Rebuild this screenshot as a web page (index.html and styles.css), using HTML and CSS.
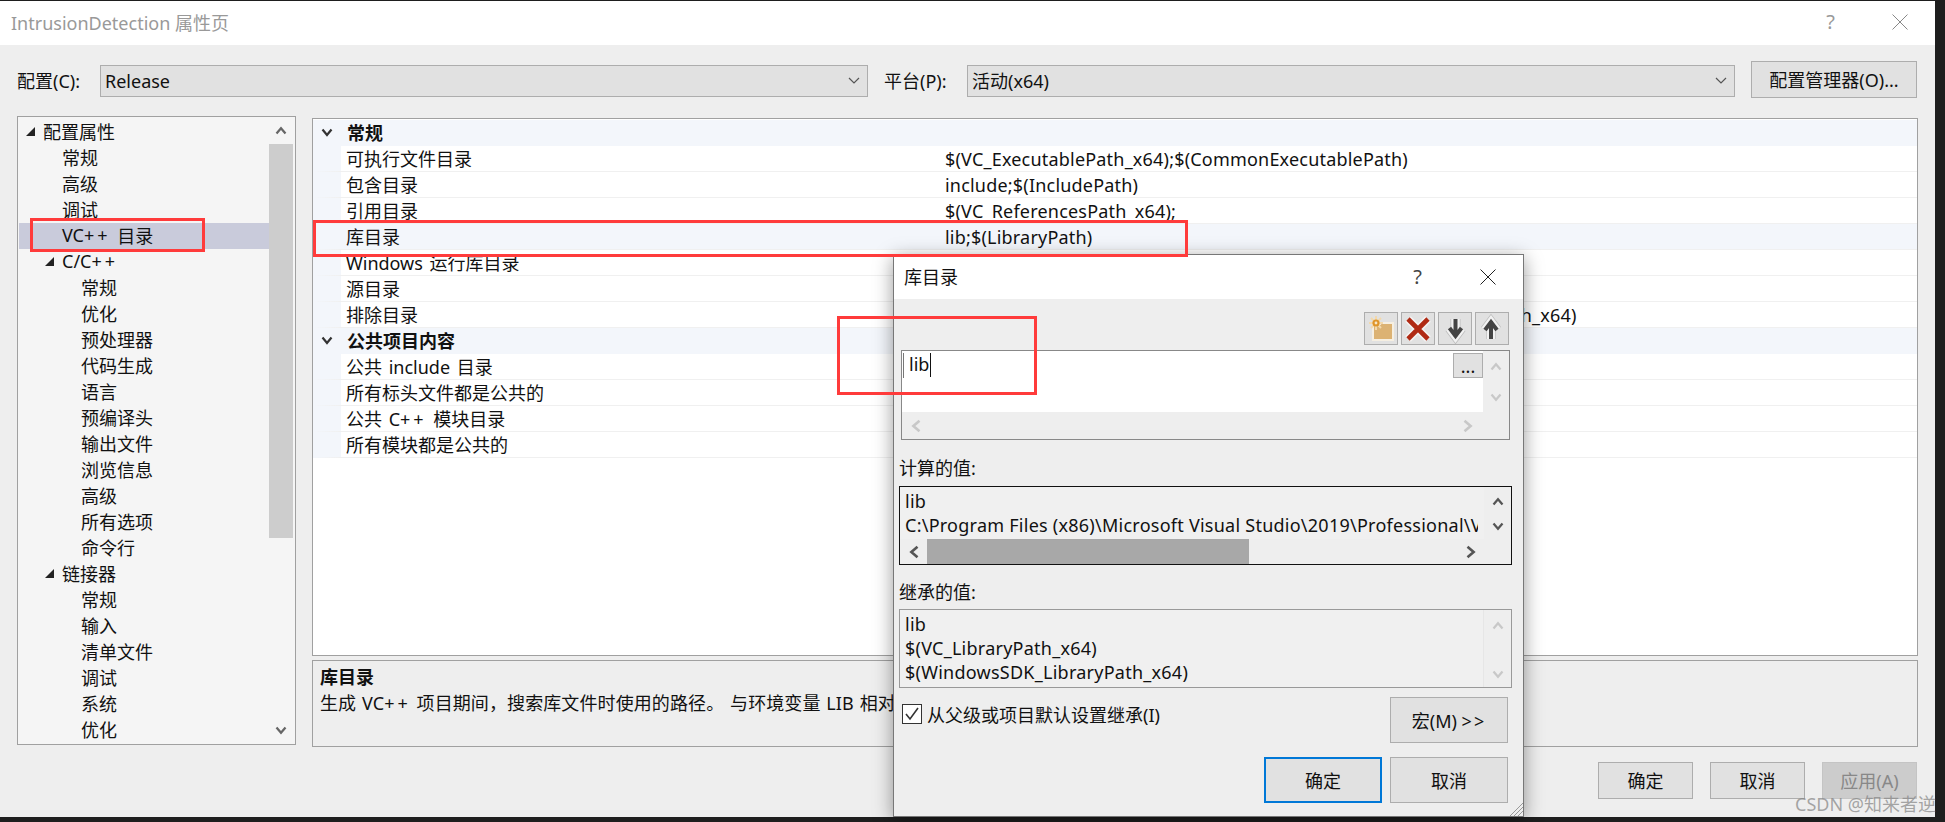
FILE: index.html
```html
<!DOCTYPE html>
<html lang="zh-CN">
<head>
  <meta charset="UTF-8" />
  <title>IntrusionDetection 属性页</title>
  <link rel="stylesheet" href="styles.css">
</head>
<body>
  <svg class="defs" width="0" height="0">
    <symbol id="up" viewBox="0 0 16 12"><path d="M2 10 8 3l6 7" fill="none" stroke="currentColor" stroke-width="3"/></symbol>
    <symbol id="down" viewBox="0 0 16 12"><path d="M2 2l6 7 6-7" fill="none" stroke="currentColor" stroke-width="3"/></symbol>
    <symbol id="left" viewBox="0 0 12 16"><path d="M10 2 3 8l7 6" fill="none" stroke="currentColor" stroke-width="3"/></symbol>
    <symbol id="right" viewBox="0 0 12 16"><path d="M2 2l7 6-7 6" fill="none" stroke="currentColor" stroke-width="3"/></symbol>
    <symbol id="caret" viewBox="0 0 12 8"><path d="M1 1l5 5 5-5" fill="none" stroke="currentColor" stroke-width="1.2"/></symbol>
    <symbol id="twist" viewBox="0 0 12 12"><path d="M1.5 3.5 6 9l4.5-5.5" fill="none" stroke="currentColor" stroke-width="2.2"/></symbol>
    <symbol id="close" viewBox="0 0 16 16"><path d="M.5.5l15 15M15.5.5l-15 15" fill="none" stroke="currentColor" stroke-width="1"/></symbol>
  </svg>

  <div class="window">
    <div class="titlebar">
      <span class="title">IntrusionDetection 属性页</span>
      <span class="help">?</span>
      <svg class="close"><use href="#close"/></svg>
    </div>

    <div class="config-row">
      <label class="config-label">配置(C):</label>
      <div class="select select-config">Release<svg class="caret"><use href="#caret"/></svg></div>
      <label class="config-label platform-label">平台(P):</label>
      <div class="select select-platform">活动(x64)<svg class="caret"><use href="#caret"/></svg></div>
      <button class="btn btn-manager">配置管理器(O)...</button>
    </div>

    <div class="content">
      <div class="tree">
        <div class="tree-list">
          <div class="node l0"><i class="twisty"></i>配置属性</div>
          <div class="node l1">常规</div>
          <div class="node l1">高级</div>
          <div class="node l1">调试</div>
          <div class="node l1 selected">VC<span class="plus">++</span> 目录</div>
          <div class="node l1t"><i class="twisty"></i>C/C<span class="plus">++</span></div>
          <div class="node l2">常规</div>
          <div class="node l2">优化</div>
          <div class="node l2">预处理器</div>
          <div class="node l2">代码生成</div>
          <div class="node l2">语言</div>
          <div class="node l2">预编译头</div>
          <div class="node l2">输出文件</div>
          <div class="node l2">浏览信息</div>
          <div class="node l2">高级</div>
          <div class="node l2">所有选项</div>
          <div class="node l2">命令行</div>
          <div class="node l1t"><i class="twisty"></i>链接器</div>
          <div class="node l2">常规</div>
          <div class="node l2">输入</div>
          <div class="node l2">清单文件</div>
          <div class="node l2">调试</div>
          <div class="node l2">系统</div>
          <div class="node l2">优化</div>
        </div>
        <div class="tree-scroll">
          <div class="tree-arrow"><svg class="arrow"><use href="#up"/></svg></div>
          <div class="tree-thumb"></div>
          <div class="tree-arrow tree-arrow-down"><svg class="arrow"><use href="#down"/></svg></div>
        </div>
      </div>

      <div class="right-col">
        <div class="grid">
          <div class="cat"><svg class="twist"><use href="#twist"/></svg>常规</div>
          <div class="prop"><span class="name">可执行文件目录</span><span class="value">$(VC_ExecutablePath_x64);$(CommonExecutablePath)</span></div>
          <div class="prop"><span class="name">包含目录</span><span class="value">include;$(IncludePath)</span></div>
          <div class="prop"><span class="name">引用目录</span><span class="value">$(VC_ReferencesPath_x64);</span></div>
          <div class="prop prop-active"><span class="name">库目录</span><span class="value">lib;$(LibraryPath)</span></div>
          <div class="prop"><span class="name">Windows 运行库目录</span><span class="value">$(VC_WinRT)</span></div>
          <div class="prop"><span class="name">源目录</span><span class="value">$(VC_SourcePath);</span></div>
          <div class="prop"><span class="name">排除目录</span><span class="value">$(CommonExcludePath);$(VC_ExecutablePath_x64);$(VC_LibraryPath_x64)</span></div>
          <div class="cat"><svg class="twist"><use href="#twist"/></svg>公共项目内容</div>
          <div class="prop"><span class="name">公共 include 目录</span><span class="value"></span></div>
          <div class="prop"><span class="name">所有标头文件都是公共的</span><span class="value">否</span></div>
          <div class="prop"><span class="name">公共 C<span class="plus">++</span> 模块目录</span><span class="value"></span></div>
          <div class="prop"><span class="name">所有模块都是公共的</span><span class="value">否</span></div>
        </div>
        <div class="desc">
          <div class="desc-title">库目录</div>
          <div class="desc-text">生成 VC<span class="plus">++</span> 项目期间，搜索库文件时使用的路径。 与环境变量 LIB 相对应。</div>
        </div>
      </div>
    </div>

    <div class="footer">
      <button class="btn btn-foot">确定</button>
      <button class="btn btn-foot">取消</button>
      <button class="btn btn-foot btn-disabled">应用(A)</button>
    </div>
  </div>

  <div class="dialog">
    <div class="dlg-title">
      <span class="dlg-name">库目录</span>
      <span class="dlg-help">?</span>
      <svg class="dlg-close"><use href="#close"/></svg>
    </div>
    <div class="dlg-body">
      <div class="toolbar">
        <button class="tool">
          <svg viewBox="0 0 34 33" width="34" height="33">
            <path d="M9 13h6l2-2h12v17H9z" fill="#dcb273" stroke="#f6efe2" stroke-width="2"/>
            <path d="M12 4v14M5 11h14M7 6l10 10M17 6 7 16" stroke="#f3d9ac" stroke-width="2"/>
            <circle cx="12" cy="11" r="3.6" fill="#df952a"/>
            <circle cx="12" cy="11" r="1.4" fill="#f7e6c6"/>
          </svg>
        </button>
        <button class="tool">
          <svg viewBox="0 0 34 33" width="34" height="33">
            <path d="M7 7l20 20M27 7 7 27" fill="none" stroke="#f4f4f4" stroke-width="8"/>
            <path d="M7 7l20 20M27 7 7 27" fill="none" stroke="#b02a14" stroke-width="4.6"/>
          </svg>
        </button>
        <button class="tool">
          <svg viewBox="0 0 34 33" width="34" height="33">
            <path d="M17.5 7v18M11.5 16l6 8 6-8" fill="none" stroke="#bdbdbd" stroke-width="10"/>
            <path d="M17.5 7v18M11.5 16l6 8 6-8" fill="none" stroke="#f2f2f2" stroke-width="8.5"/>
            <path d="M17.5 7v18M11.5 16l6 8 6-8" fill="none" stroke="#444" stroke-width="4"/>
          </svg>
        </button>
        <button class="tool">
          <svg viewBox="0 0 34 33" width="34" height="33">
            <path d="M16 27V9M10 18l6-8 6 8" fill="none" stroke="#bdbdbd" stroke-width="10"/>
            <path d="M16 27V9M10 18l6-8 6 8" fill="none" stroke="#f2f2f2" stroke-width="8.5"/>
            <path d="M16 27V9M10 18l6-8 6 8" fill="none" stroke="#444" stroke-width="4"/>
          </svg>
        </button>
      </div>

      <div class="editbox">
        <div class="edit-main">
          <div class="edit-line">
            <span class="edit-text">lib</span>
            <button class="btn btn-dots">...</button>
          </div>
        </div>
        <div class="edit-vscroll">
          <svg class="arrow arrow-off"><use href="#up"/></svg>
          <svg class="arrow arrow-off"><use href="#down"/></svg>
        </div>
        <div class="edit-hscroll">
          <svg class="harrow arrow-off"><use href="#left"/></svg>
          <svg class="harrow arrow-off"><use href="#right"/></svg>
        </div>
      </div>

      <div class="field-label">计算的值:</div>
      <div class="valbox valbox-dark">
        <div class="val-lines val-lines-two">
          <div>lib</div>
          <div>C:\Program Files (x86)\Microsoft Visual Studio\2019\Professional\VC</div>
        </div>
        <div class="val-vscroll">
          <svg class="arrow"><use href="#up"/></svg>
          <svg class="arrow"><use href="#down"/></svg>
        </div>
        <div class="val-hscroll">
          <svg class="harrow"><use href="#left"/></svg>
          <div class="val-track"><div class="val-thumb"></div></div>
          <svg class="harrow"><use href="#right"/></svg>
        </div>
      </div>

      <div class="field-label field-label-next">继承的值:</div>
      <div class="valbox valbox-full">
        <div class="val-lines">
          <div>lib</div>
          <div>$(VC_LibraryPath_x64)</div>
          <div>$(WindowsSDK_LibraryPath_x64)</div>
        </div>
        <div class="val-vscroll val-vscroll-off">
          <svg class="arrow arrow-off"><use href="#up"/></svg>
          <svg class="arrow arrow-off"><use href="#down"/></svg>
        </div>
      </div>

      <div class="inherit-row">
        <label class="check">
          <svg class="checkbox" viewBox="0 0 20 20" width="20" height="20">
            <rect x=".5" y=".5" width="19" height="19" fill="#fff" stroke="#333"/>
            <path d="M4 10l4 5 8-11" fill="none" stroke="#333" stroke-width="1.6"/>
          </svg>
          从父级或项目默认设置继承(I)
        </label>
        <button class="btn btn-dlg">宏(M) <span class="gt">&gt;&gt;</span></button>
      </div>

      <div class="dlg-footer">
        <button class="btn btn-dlg btn-primary">确定</button>
        <button class="btn btn-dlg">取消</button>
      </div>
    </div>
    <svg class="grip" viewBox="0 0 14 14" width="14" height="14">
      <path d="M14 1 1 14M14 5 5 14M14 9 9 14" stroke="#999" stroke-width="1"/>
    </svg>
  </div>

  <div class="mark mark-tree"></div>
  <div class="mark mark-row"></div>
  <div class="mark mark-edit"></div>
  <div class="watermark">CSDN @知来者逆</div>
</body>
</html>
```

FILE: styles.css
```css
* {
  box-sizing: border-box;
}

body {
  margin: 0;
  width: 1945px;
  height: 822px;
  overflow: hidden;
  position: relative;
  background-color: #1e1e1e;
  color: #111;
  font-family: "Noto Sans", "Noto Sans CJK SC", sans-serif;
  font-size: 18px;
}

.defs {
  position: absolute;
}

button {
  font: inherit;
  color: inherit;
  padding: 0;
}

.plus {
  letter-spacing: 3px;
}

.window {
  width: 1935px;
  height: 816px;
  margin-top: 1px;
  background-color: #eee;
}

.titlebar {
  height: 44px;
  display: flex;
  align-items: center;
  padding-left: 11px;
  padding-bottom: 3px;
  background-color: #fff;
  color: #999;
}

.title {
  flex: 1;
}

.help {
  margin-right: 57px;
  font-size: 20px;
}

.close {
  width: 16px;
  height: 16px;
  margin-right: 27px;
  color: #888;
}

.config-row {
  display: flex;
  align-items: flex-start;
  height: 37px;
  margin-top: 16px;
  padding-left: 17px;
}

.config-label {
  width: 83px;
  height: 32px;
  margin-top: 4px;
  line-height: 32px;
}

.platform-label {
  width: 83px;
  margin-left: 16px;
}

.select {
  height: 32px;
  margin-top: 4px;
  padding-left: 4px;
  line-height: 30px;
  background-color: #e1e1e1;
  border: 1px solid #adadad;
  display: flex;
  justify-content: space-between;
  align-items: center;
}

.select-config {
  width: 768px;
}

.select-platform {
  width: 768px;
}

.caret {
  width: 12px;
  height: 8px;
  margin-right: 7px;
  color: #555;
}

.btn {
  background-color: #e1e1e1;
  border: 1px solid #adadad;
}

.btn-manager {
  width: 166px;
  height: 37px;
  margin-left: 16px;
  padding-bottom: 2px;
}

.content {
  display: flex;
  gap: 16px;
  margin-top: 18px;
  padding-left: 17px;
}

.tree {
  width: 279px;
  height: 629px;
  display: flex;
  padding-top: 2px;
  background-color: #f5f5f5;
  border: 1px solid #a0a0a0;
}

.tree-list {
  width: 251px;
}

.node {
  height: 26px;
  display: flex;
  align-items: center;
  padding-bottom: 2px;
  white-space: pre;
  word-spacing: 2px;
}

.l0 {
  padding-left: 8px;
}

.l1 {
  padding-left: 44px;
}

.l1t {
  padding-left: 27px;
}

.l2 {
  padding-left: 63px;
}

.twisty {
  width: 0;
  height: 0;
  margin-right: 8px;
  border-style: solid;
  border-width: 0 0 9px 9px;
  border-color: transparent transparent #222 transparent;
}

.selected {
  margin-left: 1px;
  padding-left: 43px;
  background-color: #c9cbdb;
}

.tree-scroll {
  width: 24px;
  margin-top: -2px;
  display: flex;
  flex-direction: column;
  align-items: stretch;
}

.tree-arrow {
  height: 27px;
  display: flex;
  align-items: center;
  justify-content: center;
  color: #666;
}

.tree-arrow-down {
  margin-top: auto;
}

.tree-thumb {
  height: 394px;
  background-color: #cdcdcd;
}

.arrow {
  width: 12px;
  height: 9px;
}

.harrow {
  width: 12px;
  height: 14px;
}

.arrow-off {
  color: #c8c8c8;
}

.right-col {
  width: 1606px;
  margin-top: 2px;
}

.grid {
  height: 538px;
  padding-top: 1px;
  background-color: #fff;
  border: 1px solid #a0a0a0;
}

.cat {
  height: 26px;
  display: flex;
  align-items: center;
  padding-left: 8px;
  padding-bottom: 2px;
  font-weight: bold;
  background-color: #f3f6fb;
}

.twist {
  width: 12px;
  height: 12px;
  margin-right: 14px;
  color: #333;
}

.prop {
  height: 26px;
  display: flex;
  padding-top: 2px;
  line-height: 23px;
  border-bottom: 1px solid #f0f0f0;
  border-left: 28px solid #f3f6fb;
  white-space: nowrap;
}

.prop-active {
  background-color: #f3f6fb;
}

.name {
  width: 604px;
  padding-left: 5px;
  word-spacing: 2px;
}

.value {
  letter-spacing: 0.2px;
}

.desc {
  height: 87px;
  margin-top: 4px;
  padding: 3px 7px;
  line-height: 26px;
  background-color: #eee;
  border: 1px solid #a0a0a0;
}

.desc-title {
  font-weight: bold;
}

.desc-text {
  letter-spacing: 0.1px;
  word-spacing: 1px;
}

.footer {
  display: flex;
  justify-content: flex-end;
  gap: 17px;
  margin-top: 15px;
  padding-right: 18px;
}

.btn-foot {
  width: 95px;
  height: 37px;
  padding-bottom: 2px;
}

.btn-disabled {
  background-color: #ccc;
  border-color: #c4c4c4;
  color: #888;
}

.dialog {
  position: absolute;
  left: 893px;
  top: 254px;
  width: 631px;
  height: 563px;
  background-color: #eee;
  border: 1px solid #777;
  box-shadow: 0 4px 18px rgba(0, 0, 0, 0.4);
}

.dlg-title {
  height: 44px;
  display: flex;
  align-items: center;
  padding-left: 10px;
  background-color: #fff;
}

.dlg-name {
  flex: 1;
  padding-bottom: 2px;
}

.dlg-help {
  margin-right: 58px;
  padding-bottom: 2px;
  font-size: 20px;
  color: #444;
}

.dlg-close {
  width: 16px;
  height: 16px;
  margin-right: 27px;
  color: #222;
}

.dlg-body {
  padding: 13px 0 0 5px;
}

.toolbar {
  display: flex;
  justify-content: flex-end;
  gap: 3px;
  padding-right: 14px;
}

.tool {
  width: 34px;
  height: 33px;
  background-color: #e1e1e1;
  border: 1px solid #adadad;
  position: relative;
  overflow: hidden;
}

.tool svg {
  position: absolute;
  left: -1px;
  top: -1px;
}

.editbox {
  width: 609px;
  height: 90px;
  margin: 5px 0 0 2px;
  display: grid;
  grid-template-columns: 581px 26px;
  grid-template-rows: 61px 27px;
  border: 1px solid #888;
}

.edit-main {
  padding: 2px 0 0 1px;
  background-color: #fff;
}

.edit-line {
  height: 25px;
  display: flex;
  justify-content: space-between;
  border-left: 1px solid #777;
}

.edit-text {
  margin-left: 5px;
  padding-right: 1px;
  line-height: 22px;
  border-right: 1px solid #111;
  height: 24px;
}

.btn-dots {
  width: 30px;
  height: 25px;
  border-left-color: #adadad;
  line-height: 22px;
}

.edit-vscroll {
  display: flex;
  flex-direction: column;
  align-items: center;
  gap: 22px;
  padding-top: 11px;
}

.edit-hscroll {
  grid-column: 1 / 3;
  display: flex;
  justify-content: space-between;
  align-items: center;
  padding: 0 35px 0 8px;
}

.field-label {
  height: 26px;
  margin-top: 15px;
  line-height: 26px;
}

.field-label-next {
  margin-top: 14px;
  margin-bottom: -1px;
}

.field-label + .valbox {
  margin-top: 5px;
}

.valbox {
  width: 613px;
  height: 79px;
  display: grid;
  grid-template-columns: 584px 27px;
  grid-template-rows: 52px 25px;
  border: 1px solid #999;
}

.valbox-dark {
  border-color: #111;
}

.valbox-full {
  grid-template-rows: 77px;
}

.val-lines {
  padding: 2px 0 0 5px;
  line-height: 24px;
  letter-spacing: 0.25px;
  white-space: nowrap;
  overflow: hidden;
  background-color: #f0f0f0;
  border-right: 1px solid #e6e6e6;
}

.val-lines-two {
  padding-top: 2px;
  border-right: 6px solid #f0f0f0;
}

.val-vscroll {
  display: flex;
  flex-direction: column;
  align-items: center;
  gap: 16px;
  padding-top: 10px;
  color: #555;
}

.val-vscroll-off {
  gap: 40px;
  padding-top: 11px;
}

.val-hscroll {
  grid-column: 1 / 3;
  display: flex;
  align-items: center;
  padding: 0 34px 0 8px;
  color: #555;
}

.val-track {
  flex: 1;
  height: 25px;
  margin: 0 15px 0 7px;
}

.val-thumb {
  width: 322px;
  height: 100%;
  background-color: #a8a8a8;
}

.inherit-row {
  display: flex;
  justify-content: space-between;
  align-items: flex-start;
  width: 609px;
  margin-top: 9px;
}

.check {
  display: flex;
  align-items: center;
  gap: 5px;
  height: 20px;
  margin: 7px 0 0 3px;
}

.btn-dlg {
  width: 118px;
  height: 46px;
}

.gt {
  letter-spacing: 2px;
}

.dlg-footer {
  display: flex;
  justify-content: flex-end;
  gap: 8px;
  width: 609px;
  margin-top: 14px;
}

.btn-primary {
  border: 2px solid #0078d7;
}

.grip {
  position: absolute;
  right: 0;
  bottom: 0;
}

.mark {
  position: absolute;
  border: 3px solid #ff3b3b;
}

.mark-tree {
  left: 30px;
  top: 218px;
  width: 175px;
  height: 34px;
}

.mark-row {
  left: 313px;
  top: 220px;
  width: 875px;
  height: 37px;
}

.mark-edit {
  left: 837px;
  top: 316px;
  width: 200px;
  height: 79px;
}

.watermark {
  position: absolute;
  left: 1795px;
  top: 791px;
  font-size: 18px;
  line-height: 26px;
  color: rgba(130, 130, 130, 0.7);
}
```
